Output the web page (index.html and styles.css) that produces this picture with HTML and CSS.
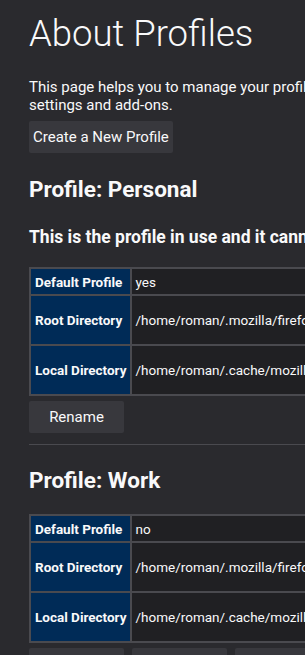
FILE: index.html
```html
<!DOCTYPE html>
<html>
<head>
<meta charset="utf-8">
<link rel="stylesheet" href="styles.css">
</head>
<body>
<main class="page">
  <h1 class="title">About Profiles</h1>
  <p class="intro">This page helps you to manage your profiles. Each profile is a separate world which contains separate history, bookmarks,<br>settings and add-ons.</p>
  <div class="actions"><button class="btn">Create a New Profile</button></div>

  <section class="profile">
    <h2 class="profile-name">Profile: Personal</h2>
    <h3 class="profile-note">This is the profile in use and it cannot be deleted.</h3>
    <table class="info">
      <tr class="row-short"><th>Default Profile</th><td>yes</td></tr>
      <tr class="row-tall"><th>Root Directory</th><td>/home/roman/.mozilla/firefox/abcd1234.default</td><td class="cell-btn"><button class="btn">Open Directory</button></td></tr>
      <tr class="row-tall"><th>Local Directory</th><td>/home/roman/.cache/mozilla/firefox/abcd1234.default</td><td class="cell-btn"><button class="btn">Open Directory</button></td></tr>
    </table>
    <div class="profile-actions"><button class="btn wide">Rename</button></div>
  </section>

  <hr class="sep">

  <section class="profile">
    <h2 class="profile-name">Profile: Work</h2>
    <table class="info">
      <tr class="row-short"><th>Default Profile</th><td>no</td></tr>
      <tr class="row-tall"><th>Root Directory</th><td>/home/roman/.mozilla/firefox/efgh5678.work</td><td class="cell-btn"><button class="btn">Open Directory</button></td></tr>
      <tr class="row-tall"><th>Local Directory</th><td>/home/roman/.cache/mozilla/firefox/efgh5678.work</td><td class="cell-btn"><button class="btn">Open Directory</button></td></tr>
    </table>
    <div class="profile-actions"><button class="btn wide">Rename</button><button class="btn wide">Remove</button><button class="btn wide">Set as default profile</button></div>
  </section>
</main>
</body>
</html>
```
FILE: styles.css
```css
html, body {
  margin: 0;
  padding: 0;
  background: #2a2a2e;
  overflow: hidden;
}
body {
  font-family: Roboto, "Noto Sans", sans-serif;
  color: #f9f9fa;
  font-size: 15px;
}
.page {
  width: 900px;
  padding: 0 0 0 29px;
}
.title {
  font-weight: 300;
  font-size: 36.5px;
  line-height: 46px;
  margin: 11px 0 0 0;
  color: #f9f9fa;
}
.intro {
  margin: 21px 0 0 0;
  line-height: 18px;
  font-size: 15px;
  white-space: nowrap;
}
.actions {
  margin-top: 7px;
}
.btn {
  font-family: Roboto, "Noto Sans", sans-serif;
  font-size: 15px;
  color: #f9f9fa;
  background: #38383d;
  border: none;
  border-radius: 2px;
  height: 32px;
  padding: 0 4px;
  margin: 0;
  white-space: nowrap;
}
.btn.wide {
  min-width: 95px;
  padding: 0 16px;
  margin-right: 8px;
}
.profile-name {
  font-size: 22.5px;
  font-weight: 700;
  margin: 23px 0 0 0;
  line-height: 27px;
}
.profile-note {
  font-size: 17.5px;
  font-weight: 700;
  margin: 23px 0 0 0;
  line-height: 22px;
  white-space: nowrap;
}
.info {
  border-collapse: collapse;
  margin-top: 19px;
  white-space: nowrap;
}
.profile-name + .info {
  margin-top: 20px;
}
.info th, .info td {
  border: 2px solid #4a4a4f;
  padding: 0 4px;
  font-size: 13.5px;
}
.info td {
  padding-left: 3px;
}
.info th {
  background: #002b57;
  font-size: 13.5px;
  font-weight: 700;
  text-align: left;
  width: 91px;
}
.info td {
  background: #202023;
  width: 560px;
}
.info td.cell-btn {
  width: auto;
}
.row-short { height: 27px; }
.row-tall { height: 50px; }
.profile-actions {
  margin-top: 5px;
  display: flex;
}
.sep {
  border: none;
  border-top: 1px solid #4a4a4f;
  margin: 11px 0 0 0;
  width: 730px;
}
.sep + .profile .profile-name {
  margin-top: 22px;
}
```
